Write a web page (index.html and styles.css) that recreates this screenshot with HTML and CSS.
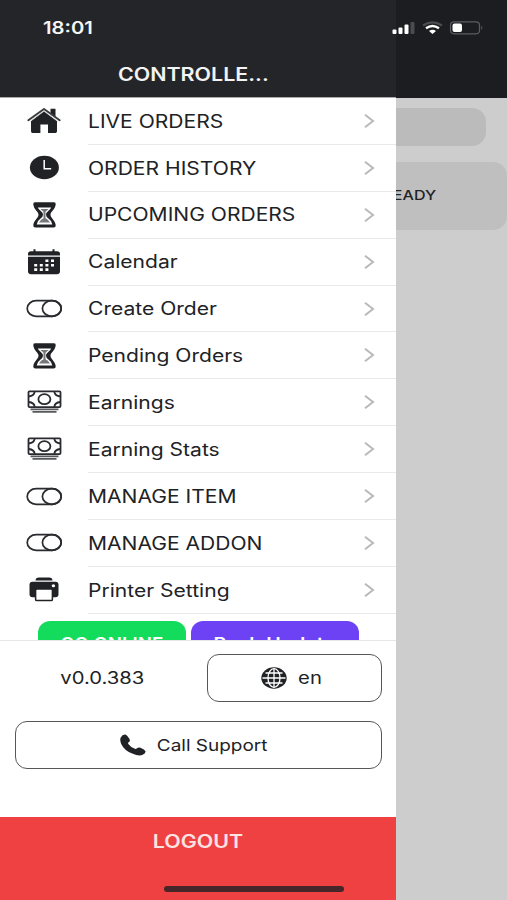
FILE: index.html
```html
<!DOCTYPE html>
<html lang="en">
<head>
    <meta charset="UTF-8">
    <meta name="viewport" content="width=device-width, initial-scale=1.0">
    <title>Controller</title>
    <link rel="stylesheet" href="styles.css">
</head>
<body>
    <svg class="sprite" aria-hidden="true">
        <symbol id="i-home" viewBox="0 0 36 28">
            <path d="M5 14.200 18 4.200l13 10v10.100q0 1.700-1.500 1.700H22v-8.600h-7.600V26H6.500Q5 26 5 24.300z" fill="#202225"/>
            <path d="M24.500 1.800h5V10l-5-3.600z" fill="#202225"/>
            <path d="M2.300 13.200 18 2l15.700 11.200" fill="none" stroke="#3b3d40" stroke-width="2" stroke-linecap="round" stroke-linejoin="round"/>
            <path d="M4 14.200 18 4.200l14 10" fill="none" stroke="#c9c9ca" stroke-width=".8"/>
        </symbol>
        <symbol id="i-clock" viewBox="0 0 36 28">
            <ellipse cx="18.400" cy="13.500" rx="14.500" ry="11.800" fill="#202225"/>
            <path d="M18.200 6v8.700h7" fill="none" stroke="#fff" stroke-width="1.500"/>
        </symbol>
        <symbol id="i-hourglass" viewBox="0 0 36 28">
            <path d="M9 1.200H28Q30 1.200 29.700 3.600C29 9 24.500 10.500 24.500 13.800S29 19 29.700 24Q30 26.400 28 26.400H9Q7 26.400 7.300 24C8 19 12.500 17.100 12.500 13.800S8 9 7.300 3.600Q7 1.200 9 1.200z" fill="#202225"/>
            <path d="M11.800 6.400h13.400q-.6 1.600-2.500 3Q20 11.500 20 13.800t2.700 4q2.900 1.800 3.600 5.700H10.700q.7-3.900 3.600-5.700Q17 16.100 17 13.800t-2.700-4.400q-1.900-1.400-2.500-3z" fill="#fff"/>
            <path d="M14.500 8h8l-3 2.800v6.400q2.500.8 4.500 4.300H13q2-3.500 4.500-4.300v-6.400z" fill="#77787a"/>
        </symbol>
        <symbol id="i-calendar" viewBox="0 0 36 28">
            <path d="M5 3.200h26q3 0 3 2.800v1.500H2V6Q2 3.200 5 3.200zM2 8.800h32v14.500q0 3-3.200 3H5.200q-3.200 0-3.200-3zM7.500 1.300h2v3h-2zM26.500 1.300h2v3h-2z" fill="#202225"/>
            <path d="M19.400 11.400h3v2.700h-3zM25 11.400h3v2.700h-3zM8.200 15.900h3v2.700h-3zM13.800 15.900h3v2.700h-3zM19.400 15.900h3v2.700h-3zM25 15.900h3v2.700h-3zM8.200 20.300h3v2.700h-3zM13.800 20.300h3v2.700h-3zM19.400 20.300h3v2.700h-3z" fill="#fff"/>
        </symbol>
        <symbol id="i-toggle" viewBox="0 0 36 28">
            <g fill="none" stroke="#292b2e" stroke-width="1.700">
                <rect x="1.200" y="5.700" width="34" height="15.600" rx="9" ry="7.800"/>
                <ellipse cx="25.800" cy="13.500" rx="9.400" ry="7.800"/>
            </g>
        </symbol>
        <symbol id="i-cash" viewBox="0 0 36 28">
            <g fill="none" stroke="#292b2e" stroke-width="1.800">
                <rect x="2.500" y="2.300" width="32" height="15.800" rx="1"/>
                <ellipse cx="18.400" cy="10.200" rx="6" ry="5"/>
                <path d="M2.700 7.500q5.500-.5 6-4.800M34.300 7.500q-5.500-.5-6-4.800M2.700 13q5.500.5 6 4.800M34.300 13q-5.500.5-6 4.800"/>
                <path d="M4.500 20.300h28M6.500 22.900h24" stroke="#58595c"/>
            </g>
        </symbol>
        <symbol id="i-printer" viewBox="0 0 36 28">
            <path d="M9.500 4.600q0-3 3.500-3h10q3.500 0 3.500 3zM6.500 5.800h23q3 0 3 3v9.500q0 3-3 3H27V14H9v7.300H6.500q-3 0-3-3V8.800q0-3 3-3z" fill="#202225"/>
            <rect x="9.600" y="13" width="16.800" height="11.600" rx="1.200" fill="#fff" stroke="#202225" stroke-width="1.500"/>
            <ellipse cx="27.400" cy="9.700" rx="1.700" ry="1.500" fill="#fff"/>
        </symbol>
        <symbol id="i-arrow" viewBox="0 0 12 16">
            <path d="M2 1.800 10 8l-8 6.200" fill="none" stroke="#b9b9bb" stroke-width="2"/>
        </symbol>
    </svg>

    <div class="phone">
        <div class="screen">
            <div class="topbar"></div>
            <div class="search"></div>
            <div class="card"><span class="txt">READY</span></div>
        </div>

        <div class="drawer">
            <div class="drawer-title"><span class="txt">CONTROLLE...</span></div>
            <div class="menu">
                <a class="menu-item"><svg class="icon"><use href="#i-home"/></svg><span class="menu-label"><span class="txt">LIVE ORDERS</span><svg class="arrow"><use href="#i-arrow"/></svg></span></a>
                <a class="menu-item"><svg class="icon"><use href="#i-clock"/></svg><span class="menu-label"><span class="txt">ORDER HISTORY</span><svg class="arrow"><use href="#i-arrow"/></svg></span></a>
                <a class="menu-item"><svg class="icon"><use href="#i-hourglass"/></svg><span class="menu-label"><span class="txt">UPCOMING ORDERS</span><svg class="arrow"><use href="#i-arrow"/></svg></span></a>
                <a class="menu-item"><svg class="icon"><use href="#i-calendar"/></svg><span class="menu-label"><span class="txt">Calendar</span><svg class="arrow"><use href="#i-arrow"/></svg></span></a>
                <a class="menu-item"><svg class="icon"><use href="#i-toggle"/></svg><span class="menu-label"><span class="txt">Create Order</span><svg class="arrow"><use href="#i-arrow"/></svg></span></a>
                <a class="menu-item"><svg class="icon"><use href="#i-hourglass"/></svg><span class="menu-label"><span class="txt">Pending Orders</span><svg class="arrow"><use href="#i-arrow"/></svg></span></a>
                <a class="menu-item"><svg class="icon"><use href="#i-cash"/></svg><span class="menu-label"><span class="txt">Earnings</span><svg class="arrow"><use href="#i-arrow"/></svg></span></a>
                <a class="menu-item"><svg class="icon"><use href="#i-cash"/></svg><span class="menu-label"><span class="txt">Earning Stats</span><svg class="arrow"><use href="#i-arrow"/></svg></span></a>
                <a class="menu-item"><svg class="icon"><use href="#i-toggle"/></svg><span class="menu-label"><span class="txt">MANAGE ITEM</span><svg class="arrow"><use href="#i-arrow"/></svg></span></a>
                <a class="menu-item"><svg class="icon"><use href="#i-toggle"/></svg><span class="menu-label"><span class="txt">MANAGE ADDON</span><svg class="arrow"><use href="#i-arrow"/></svg></span></a>
                <a class="menu-item"><svg class="icon"><use href="#i-printer"/></svg><span class="menu-label"><span class="txt">Printer Setting</span><svg class="arrow"><use href="#i-arrow"/></svg></span></a>
                <div class="actions">
                    <button class="btn btn-online"><span class="txt">GO ONLINE</span></button>
                    <button class="btn btn-update"><span class="txt">Push Update</span></button>
                </div>
            </div>
            <div class="drawer-footer">
                <div class="footer-row">
                    <div class="version"><span class="txt">v0.0.383</span></div>
                    <button class="outline-btn lang-btn">
                        <svg class="globe" viewBox="0 0 26 22">
                            <ellipse cx="13" cy="11" rx="12.700" ry="10.700" fill="#202225"/>
                            <g fill="none" stroke="#fff" stroke-width="1.300">
                                <path d="M13 1.500v19M1.500 11h23M4.500 6h17M4.500 16h17"/>
                                <ellipse cx="13" cy="11" rx="6" ry="9.300"/>
                            </g>
                        </svg>
                        <span class="txt">en</span>
                    </button>
                </div>
                <button class="outline-btn call-btn">
                    <svg class="call" viewBox="0 0 26 22">
                        <path d="M.6 3.800Q2.400.3 5.300.6q1.600.3 4.200 4.500 1 1.800-.6 2.900-1.300.8-.6 1.900 2.400 3.300 6.600 4.900 1.100.4 2.100-.6 1.500-1.300 3.500-.4 4.300 1.700 5 3.400.5 2.200-3.300 3.900-3.700 1.300-10-1.500Q4.200 16.300 1.200 9.900-.3 6 .6 3.800z" fill="#202225"/>
                    </svg>
                    <span class="txt">Call Support</span>
                </button>
            </div>
            <button class="logout-btn"><span class="txt">LOGOUT</span></button>
        </div>

        <div class="status">
            <span class="txt time">18:01</span>
            <svg class="signal" viewBox="0 0 92 16">
                <rect x=".5" y="9.500" width="4" height="4.500" rx="1" fill="#fff"/>
                <rect x="6.500" y="7.500" width="4" height="6.500" rx="1" fill="#fff"/>
                <rect x="12.500" y="4.500" width="4" height="9.500" rx="1" fill="#fff"/>
                <rect x="18.500" y="2" width="4" height="12" rx="1" fill="#4b4c50"/>
                <path d="M31 5.500Q40.500-.8 50 5.500" fill="none" stroke="#4b4c50" stroke-width="2.200"/>
                <path d="M34 8.300q6.500-4.600 13 0" fill="none" stroke="#fff" stroke-width="2.300"/>
                <path d="M37 11q3.500-2.600 7 0l-3.500 3z" fill="#fff"/>
                <rect x="58.500" y="1.800" width="29" height="12" rx="3.500" fill="none" stroke="#5c5d60" stroke-width="1.200"/>
                <rect x="60.500" y="3.500" width="9.500" height="8.600" rx="2" fill="#fff"/>
                <path d="M89.300 5.500q2.200 2.200 0 4.400z" fill="#5c5d60"/>
            </svg>
        </div>
        <div class="home-bar"></div>
    </div>
</body>
</html>
```

FILE: styles.css
```css
*{margin:0;padding:0;box-sizing:border-box}
body{background:#cdcdcd;color:#202225;font-family:Inter,'Liberation Sans',sans-serif;font-size:18px;line-height:1}
button{font:inherit;color:inherit;border:none;background:none}
.sprite{position:absolute;width:0;height:0}
.phone{position:relative;width:507px;height:900px;overflow:hidden}
.txt{display:inline-block;white-space:nowrap;transform:scaleX(1.19);transform-origin:center}

.topbar{height:98px;background:#1c1d20}
.search{height:38px;width:486px;margin-top:9.500px;background:#bbb;border-radius:14px}
.card{height:68px;margin-top:16.500px;background:#bfbfbf;border-radius:14px;padding:26.500px 71px 0 0;text-align:right;font-size:13.500px;font-weight:500}
.card .txt{transform-origin:right}

.drawer{position:absolute;left:0;top:0;width:395.500px;height:900px;background:#fff;display:flex;flex-direction:column}
.drawer-title{height:98px;background:#242529;border-bottom:1px solid #aaa;color:#f3f3f3;font-weight:600;text-align:center;padding:66px 9px 0 0}
.menu{height:542px;overflow:hidden}
.menu-item{display:flex;align-items:center;height:46.900px;padding-left:26px}
.icon{width:36px;height:28px;margin-right:26px;flex:none}
.menu-label{flex:1;height:100%;display:flex;align-items:center;justify-content:space-between;border-bottom:1px solid #e9e9e9;padding-right:21px}
.menu-label .txt{transform:scaleX(1.17);transform-origin:left;padding-top:1.500px}
.arrow{width:12px;height:16px}
.actions{display:flex;gap:5px;padding:7.500px 0 0 37.500px}
.btn{height:47px;border-radius:12px;color:#fff;font-weight:600;font-size:17px}
.btn-online{width:148px;background:#13dc5c}
.btn-online .txt{transform:scaleX(1.1)}
.btn-update{width:168.500px;background:#6d42f5}
.btn-update .txt{transform:scaleX(1.16)}

.drawer-footer{height:177px;border-top:1px solid #e6e6e6;padding:12.500px 14px 0 15px}
.footer-row{display:flex;margin-bottom:19px}
.version{flex:1;display:flex;align-items:center;justify-content:center;padding:1px 18px 0 0;font-size:17px}
.outline-btn{display:flex;align-items:center;justify-content:center;height:48px;border:1.500px solid #55575a;border-radius:12px}
.outline-btn .txt{padding-top:1px}
.lang-btn{width:174.500px;gap:13px;padding-right:8px;font-size:17px}
.call-btn{width:100%;gap:18px;padding-right:17px;font-size:16.500px}
.call-btn .txt{transform:scaleX(1.150)}
.globe,.call{width:26px;height:22px}
.logout-btn{flex:1;background:#ef4141;color:#fbe3e3;font-weight:600;padding-top:16px;display:flex;justify-content:center;align-items:flex-start}

.status{position:absolute;left:0;top:0;width:507px;padding:20px 23px 0 47px;display:flex;justify-content:space-between;color:#f6f6f6}
.time{font-weight:600;font-size:17px}
.signal{width:92px;height:16px}
.home-bar{position:absolute;left:164px;top:886px;width:180px;height:5.500px;border-radius:3px;background:#47262a}
```
